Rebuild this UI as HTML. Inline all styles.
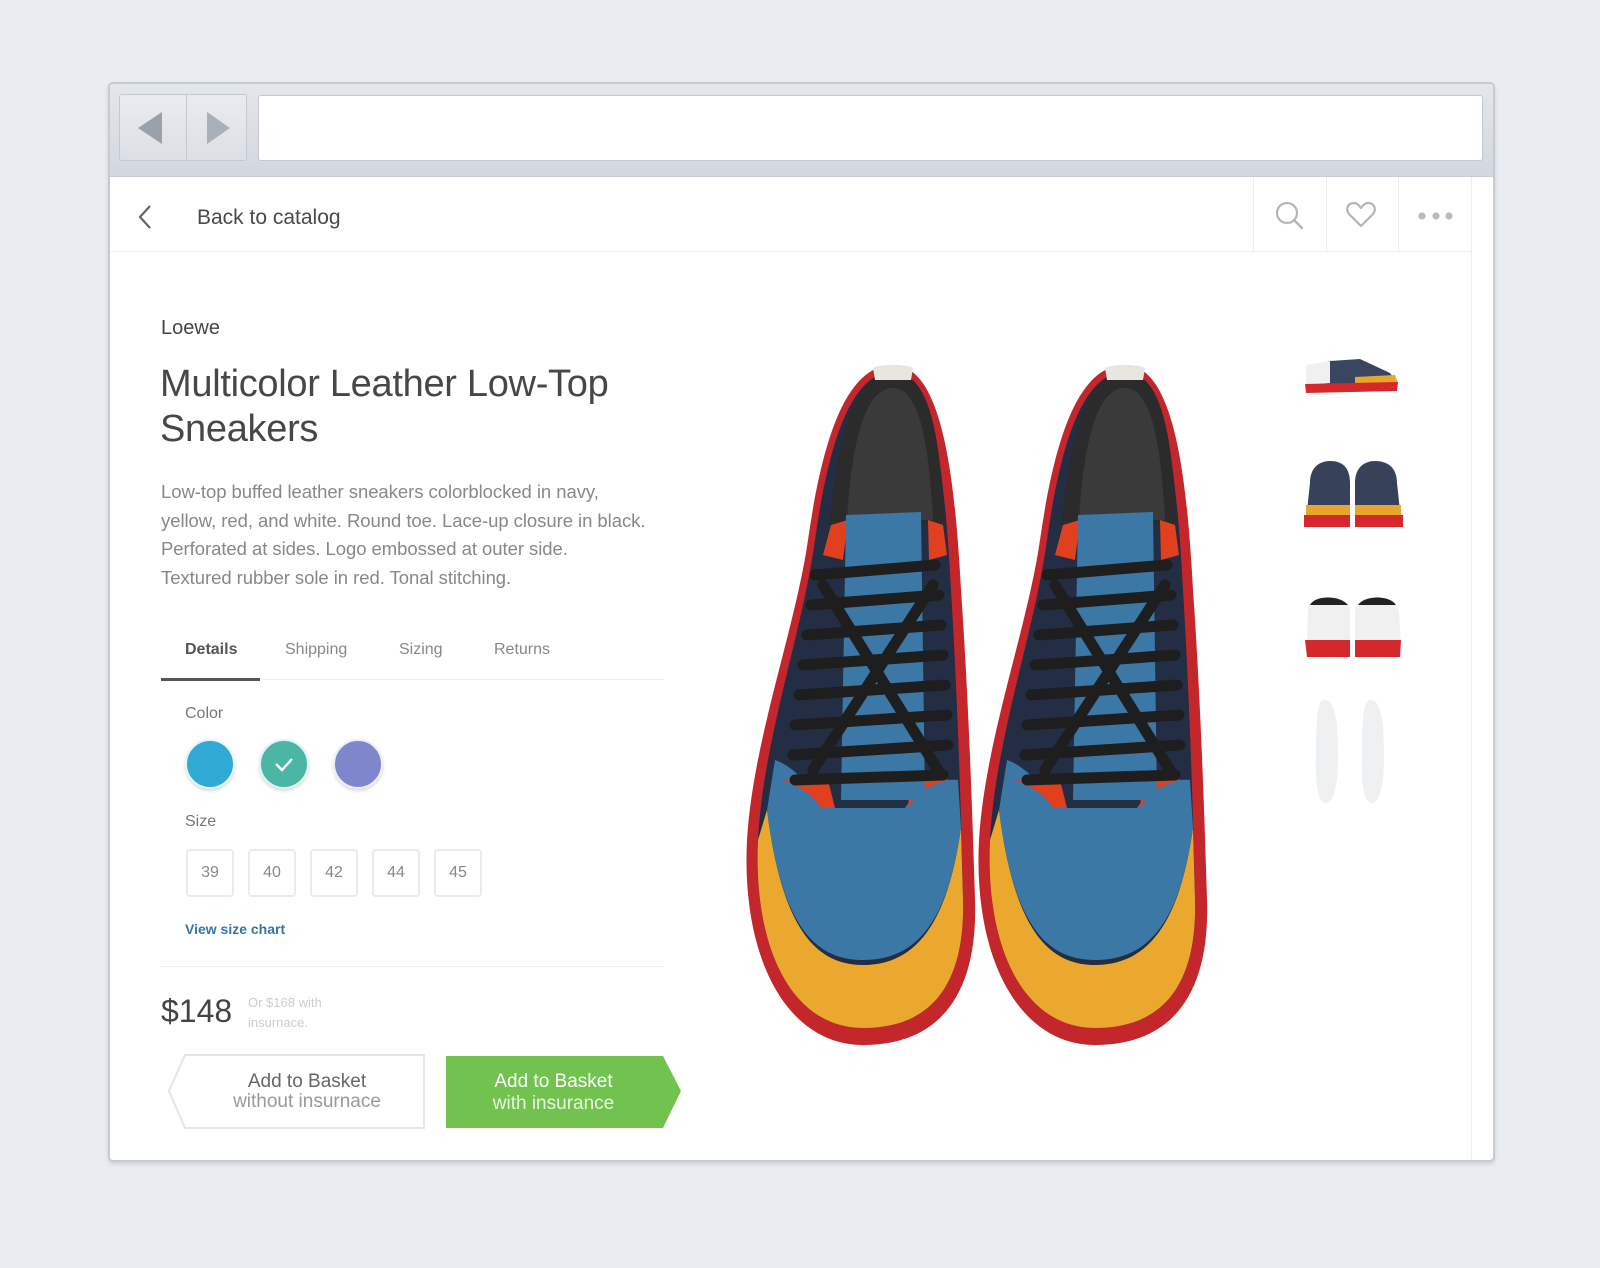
<!DOCTYPE html>
<html><head><meta charset="utf-8"><style>
*{margin:0;padding:0;box-sizing:border-box}
body{width:1600px;height:1268px;background:#e9ecf1;position:relative;overflow:hidden;font-family:"Liberation Sans",Arial,sans-serif}
.abs{position:absolute}
.win{left:108px;top:82px;width:1387px;height:1080px;background:#fff;border:2px solid #c6cad1;border-radius:5px;box-shadow:0 2px 4px rgba(0,0,0,.12);overflow:hidden}
.tool{left:0;top:0;width:1385px;height:93px;background:linear-gradient(#e3e6eb,#d3d7df);border-bottom:1px solid #c9cdd5}
.nav{left:9px;top:10px;width:128px;height:67px;border:1px solid #c4c8cf;border-radius:3px;background:linear-gradient(#e9ebef,#dcdfe5)}
.url{left:148px;top:11px;width:1225px;height:66px;background:#fff;border:1px solid #c3c7ce;border-radius:3px}
.t{position:absolute;white-space:nowrap}
.sz{position:absolute;top:849px;width:48px;height:48px;border:2px solid #ebebeb;border-radius:4px;font-size:16px;color:#888;text-align:center;line-height:44px}
</style></head><body>
<div class="abs win">
  <div class="abs tool">
    <div class="abs nav">
      <div class="abs" style="left:66px;top:0;width:1px;height:65px;background:#c4c8cf"></div>
      <svg class="abs" style="left:0;top:0" width="128" height="67"><polygon points="42,17 42,49 18,33" fill="#9aa1ab"/><polygon points="87,17 87,49 110,33" fill="#a9afb8"/></svg>
    </div>
    <div class="abs url"></div>
  </div>
</div>
<!-- header -->
<div class="abs" style="left:110px;top:251px;width:1362px;height:1px;background:#efefef"></div>
<div class="abs" style="left:1253px;top:177px;width:1px;height:75px;background:#eee"></div>
<div class="abs" style="left:1326px;top:177px;width:1px;height:75px;background:#eee"></div>
<div class="abs" style="left:1398px;top:177px;width:1px;height:75px;background:#eee"></div>
<div class="abs" style="left:1471px;top:177px;width:1px;height:983px;background:#eee"></div>
<svg class="abs" style="left:130px;top:200px" width="30" height="34"><polyline points="20,6 10,17 20,28" fill="none" stroke="#666" stroke-width="2.2"/></svg>
<div class="t" style="left:197px;top:206px;font-size:21px;color:#4a4a4a;line-height:24px">Back to catalog</div>
<svg class="abs" style="left:1270px;top:196px" width="40" height="40"><circle cx="17" cy="17" r="10" fill="none" stroke="#b5b5b5" stroke-width="2.2"/><line x1="24" y1="24" x2="32" y2="32" stroke="#b5b5b5" stroke-width="2.5" stroke-linecap="round"/></svg>
<svg class="abs" style="left:1345px;top:200px" width="32" height="30"><path d="M16 26 L4 14 C0 9 3 3 9 3 C12 3 14 5 16 8 C18 5 20 3 23 3 C29 3 32 9 28 14 Z" fill="none" stroke="#b5b5b5" stroke-width="2.2" stroke-linejoin="round"/></svg>
<svg class="abs" style="left:1415px;top:208px" width="42" height="16"><circle cx="7" cy="8" r="3.6" fill="#bbb"/><circle cx="21" cy="8" r="3.6" fill="#bbb"/><circle cx="34" cy="8" r="3.6" fill="#bbb"/></svg>
<!-- left -->
<div class="t" style="left:161px;top:317px;font-size:20px;color:#444">Loewe</div>
<div class="t" style="left:160px;top:362px;font-size:38px;line-height:45px;color:#474747;letter-spacing:-0.3px">Multicolor Leather Low-Top<br>Sneakers</div>
<div class="t" style="left:161px;top:478px;font-size:18.5px;line-height:28.7px;color:#888;letter-spacing:-0.05px">Low-top buffed leather sneakers colorblocked in navy,<br>yellow, red, and white. Round toe. Lace-up closure in black.<br>Perforated at sides. Logo embossed at outer side.<br>Textured rubber sole in red. Tonal stitching.</div>
<div class="t" style="left:185px;top:641px;font-size:16px;color:#555;font-weight:bold">Details</div>
<div class="t" style="left:285px;top:641px;font-size:16px;color:#888">Shipping</div>
<div class="t" style="left:399px;top:641px;font-size:16px;color:#888">Sizing</div>
<div class="t" style="left:494px;top:641px;font-size:16px;color:#888">Returns</div>
<div class="abs" style="left:161px;top:679px;width:503px;height:1px;background:#eee"></div>
<div class="abs" style="left:161px;top:678px;width:99px;height:3px;background:#555"></div>
<div class="t" style="left:185px;top:705px;font-size:16px;color:#777">Color</div>
<div class="abs" style="left:185px;top:739px;width:50px;height:50px;border-radius:50%;background:#2faad4;border:2px solid #e5f6fa;box-shadow:0 2px 3px rgba(0,0,0,.15)"></div>
<div class="abs" style="left:259px;top:739px;width:50px;height:50px;border-radius:50%;background:#4bb5a6;border:2px solid #e0f4f3;box-shadow:0 2px 3px rgba(0,0,0,.15)"></div>
<svg class="abs" style="left:272px;top:752px" width="24" height="24"><polyline points="4,12 10,18 20,7" fill="none" stroke="#fff" stroke-width="2.4"/></svg>
<div class="abs" style="left:333px;top:739px;width:50px;height:50px;border-radius:50%;background:#7f86cc;border:2px solid #eeeef8;box-shadow:0 2px 3px rgba(0,0,0,.15)"></div>
<div class="t" style="left:185px;top:813px;font-size:16px;color:#777">Size</div>
<div class="sz" style="left:186px">39</div>
<div class="sz" style="left:248px">40</div>
<div class="sz" style="left:310px">42</div>
<div class="sz" style="left:372px">44</div>
<div class="sz" style="left:434px">45</div>
<div class="t" style="left:185px;top:921px;font-size:14px;color:#3776a3;font-weight:bold">View size chart</div>
<div class="abs" style="left:161px;top:966px;width:503px;height:1px;background:#eee"></div>
<div class="t" style="left:161px;top:993px;font-size:32px;color:#444;line-height:36px">$148</div>
<div class="t" style="left:248px;top:993px;font-size:13px;line-height:20px;color:#ccc">Or $168 with<br>insurnace.</div>
<svg class="abs" style="left:168px;top:1054px" width="520" height="76">
  <polygon points="17,1 256,1 256,74 17,74 1,37" fill="#fff" stroke="#e6e6e6" stroke-width="2"/>
  <polygon points="278,2 495,2 513,37 495,74 278,74" fill="#72c250"/>
</svg>
<div class="t" style="left:179px;top:1072px;width:256px;text-align:center;font-size:19px;line-height:20px;color:#666">Add to Basket<br><span style="color:#999">without insurnace</span></div>
<div class="t" style="left:446px;top:1071px;width:215px;text-align:center;font-size:19px;line-height:22px;color:#fff">Add to Basket<br><span style="color:#e6f5dd">with insurance</span></div>
<!-- shoes -->
<svg class="abs" style="left:735px;top:360px" width="480" height="700" viewBox="0 0 480 700">
<defs>
<g id="shoe">
  <path d="M150 5 C100 5 78 90 65 180 C52 270 10 380 4 480 C-2 600 45 685 120 685 C200 685 235 630 232 540 C229 440 225 330 218 230 C212 120 200 5 150 5 Z" fill="#c3262b"/>
  <path d="M150 12 C105 12 84 95 72 180 C60 270 20 380 15 480 C10 590 50 668 120 668 C192 668 222 620 220 540 C218 440 214 330 208 230 C202 120 192 12 150 12 Z" fill="#232d44"/>
  <path d="M15 480 C10 590 50 668 120 668 C192 668 222 620 220 540 L218 468 C205 560 175 605 120 605 C68 605 38 560 24 450 Z" fill="#eaa92e"/>
  <path d="M24 450 C38 560 68 600 120 600 C175 600 205 560 218 468 L215 420 C192 418 172 432 162 448 L82 448 C68 425 48 405 32 400 Z" fill="#3b78a6"/>
  <path d="M40 420 C55 425 70 435 78 448 L92 448 L85 420 Z" fill="#e1401f"/>
  <path d="M165 448 C172 435 185 425 205 420 L195 410 L168 415 Z" fill="#e1401f"/>
  <path d="M150 12 C110 12 95 80 86 165 L202 165 C197 80 188 12 150 12 Z" fill="#2b2b2b"/>
  <path d="M150 28 C120 28 108 90 104 160 L190 160 C186 90 178 28 150 28 Z" fill="#3a3a3a"/>
  <path d="M130 8 C135 4 165 4 170 8 L168 20 L132 20 Z" fill="#e8e6e0"/>
  <path d="M88 165 L105 160 L100 200 L80 195 Z" fill="#e1401f"/>
  <path d="M185 160 L200 165 L204 195 L186 200 Z" fill="#e1401f"/>
  <path d="M103 155 L178 152 L182 440 L98 440 Z" fill="#3b78a6"/>
  <g stroke="#1e1e1e" stroke-width="11" stroke-linecap="round">
    <line x1="72" y1="215" x2="192" y2="205"/><line x1="68" y1="245" x2="196" y2="235"/>
    <line x1="64" y1="275" x2="198" y2="265"/><line x1="60" y1="305" x2="200" y2="295"/>
    <line x1="56" y1="335" x2="202" y2="325"/><line x1="52" y1="365" x2="204" y2="355"/>
    <line x1="50" y1="395" x2="205" y2="385"/><line x1="52" y1="420" x2="200" y2="415"/>
    <line x1="80" y1="225" x2="195" y2="410"/><line x1="190" y1="225" x2="70" y2="410"/>
  </g>
</g>
</defs>
<use href="#shoe" x="8" y="0"/>
<use href="#shoe" x="240" y="0"/>
</svg>
<!-- thumbnails -->
<svg class="abs" style="left:1300px;top:355px" width="110" height="460">
  <path d="M6 22 L10 10 L30 6 L60 4 L90 18 L98 28 L6 30 Z" fill="#3a4660"/>
  <path d="M6 10 L30 6 L30 28 L6 30 Z" fill="#f0f0f0"/>
  <path d="M55 22 L95 20 L98 28 L55 30 Z" fill="#e9a62c"/>
  <path d="M5 29 L98 27 L97 36 L6 38 Z" fill="#d5272c"/>
  <path d="M10 128 C10 112 20 106 30 106 C42 106 50 112 50 128 L50 165 L6 165 Z" fill="#37415a"/>
  <path d="M55 128 C55 112 65 106 75 106 C87 106 97 112 97 128 L101 165 L55 165 Z" fill="#37415a"/>
  <path d="M6 150 L50 150 L50 162 L6 162 Z M55 150 L101 150 L101 162 L55 162 Z" fill="#e9a62c"/>
  <path d="M4 160 L50 160 L50 172 L4 172 Z M55 160 L103 160 L103 172 L55 172 Z" fill="#d5272c"/>
  <path d="M8 255 C8 245 20 242 30 242 C42 242 50 248 50 258 L50 288 L7 288 Z" fill="#f0f0f0"/>
  <path d="M55 258 C55 246 65 242 75 242 C87 242 99 248 99 258 L101 288 L55 288 Z" fill="#f0f0f0"/>
  <path d="M10 250 C15 240 40 240 48 250 Z M58 250 C65 240 90 240 96 250 Z" fill="#222"/>
  <path d="M5 285 L50 285 L50 302 L7 302 Z M55 285 L101 285 L100 302 L55 302 Z" fill="#d5272c"/>
  <path d="M24 345 C34 345 38 360 38 400 C38 430 34 448 26 448 C18 448 15 430 16 400 C16 360 18 345 24 345 Z" fill="#eef0f2"/>
  <path d="M70 345 C80 345 84 360 84 400 C84 430 80 448 72 448 C64 448 61 430 62 400 C62 360 64 345 70 345 Z" fill="#eef0f2"/>
</svg>
</body></html>
